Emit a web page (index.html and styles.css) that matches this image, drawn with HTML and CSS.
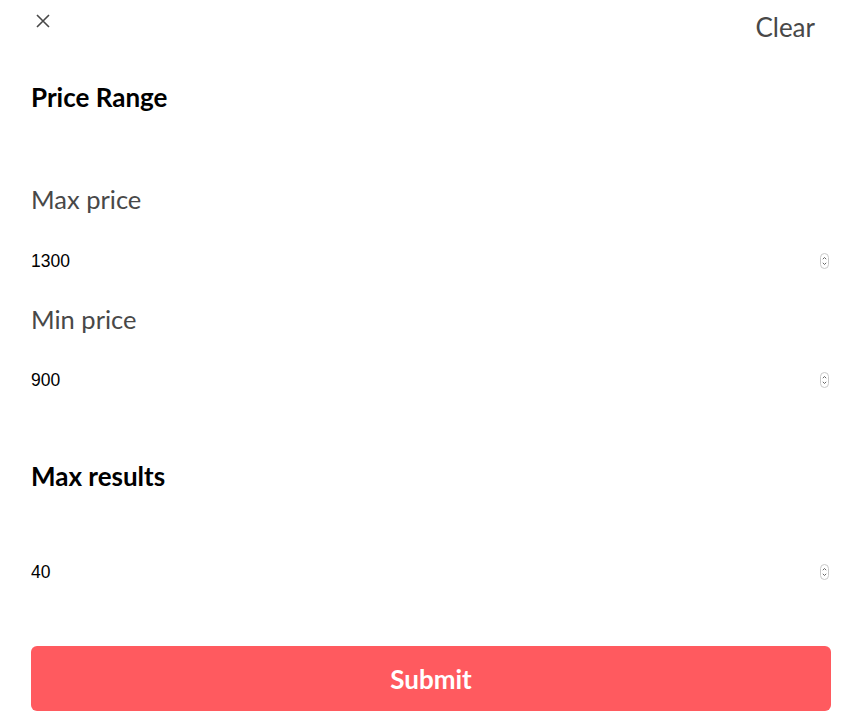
FILE: index.html
```html
<!DOCTYPE html>
<html lang="en">
<head>
<meta charset="utf-8">
<title>Filters</title>
<link rel="stylesheet" href="styles.css">
</head>
<body>
<form class="panel">
  <div class="header">
    <button type="button" class="close" aria-label="Close">
      <svg width="16" height="16" viewBox="0 0 16 16"><path d="M2 2 L14 14 M14 2 L2 14" stroke="#484848" stroke-width="1.6" fill="none"/></svg>
    </button>
    <button type="button" class="clear">Clear</button>
  </div>

  <h2 class="section-title first">Price Range</h2>

  <label class="field-label first-label" for="max">Max price</label>
  <div class="number-row">
    <input id="max" class="number-input" type="text" value="1300">
    <span class="spinner"><svg width="9" height="16" viewBox="0 0 9 16"><rect x="0.5" y="0.5" width="8" height="15" rx="4" fill="#fff" stroke="#c8c8c8"/><path d="M2.8 6.2 L4.5 4.5 L6.2 6.2 M2.8 9.8 L4.5 11.5 L6.2 9.8" stroke="#555" stroke-width="0.9" fill="none"/></svg></span>
  </div>

  <label class="field-label second-label" for="min">Min price</label>
  <div class="number-row row-min">
    <input id="min" class="number-input" type="text" value="900">
    <span class="spinner"><svg width="9" height="16" viewBox="0 0 9 16"><rect x="0.5" y="0.5" width="8" height="15" rx="4" fill="#fff" stroke="#c8c8c8"/><path d="M2.8 6.2 L4.5 4.5 L6.2 6.2 M2.8 9.8 L4.5 11.5 L6.2 9.8" stroke="#555" stroke-width="0.9" fill="none"/></svg></span>
  </div>

  <h2 class="section-title second">Max results</h2>
  <div class="number-row row-results">
    <input id="results" class="number-input" type="text" value="40">
    <span class="spinner"><svg width="9" height="16" viewBox="0 0 9 16"><rect x="0.5" y="0.5" width="8" height="15" rx="4" fill="#fff" stroke="#c8c8c8"/><path d="M2.8 6.2 L4.5 4.5 L6.2 6.2 M2.8 9.8 L4.5 11.5 L6.2 9.8" stroke="#555" stroke-width="0.9" fill="none"/></svg></span>
  </div>

  <button type="submit" class="submit">Submit</button>
</form>
</body>
</html>
```
FILE: styles.css
```css
html, body {
  margin: 0;
  padding: 0;
  background: #fff;
}

body {
  font-family: Lato, "Open Sans", sans-serif;
  color: #484848;
}

.panel {
  display: flex;
  flex-direction: column;
  padding: 0 20px 0 31px;
}

.header {
  height: 54px;
  display: flex;
  justify-content: space-between;
  align-items: flex-start;
}

.close {
  margin: 13px 0 0 4px;
  padding: 0;
  border: none;
  background: none;
  width: 16px;
  height: 16px;
  display: flex;
  cursor: pointer;
}

.clear {
  margin: 0 16px 0 0;
  padding: 0;
  border: none;
  background: none;
  font-family: inherit;
  font-size: 26px;
  line-height: 54px;
  color: #484848;
  cursor: pointer;
}

.section-title {
  margin: 0;
  font-size: 26px;
  line-height: 32px;
  font-weight: 700;
  color: #000;
}

.section-title.first { margin-top: 27px; }
.section-title.second { margin-top: 60px; }

.field-label {
  font-size: 25.5px;
  line-height: 32px;
  color: #484848;
}

.first-label { margin-top: 70px; }
.second-label { margin-top: 22px; }

.number-row {
  height: 40px;
  display: flex;
  align-items: center;
  justify-content: space-between;
  margin-top: 26px;
}

.row-min { margin-top: 25px; }
.row-results { margin-top: 60px; }

.number-input {
  flex: 1;
  border: none;
  outline: none;
  padding: 0;
  margin: 0;
  font-family: "Liberation Sans", Arial, sans-serif;
  font-size: 17.5px;
  color: #000;
  background: transparent;
}

.spinner {
  display: flex;
  margin-right: 2px;
}

.submit {
  margin-top: 54px;
  height: 65px;
  border: none;
  border-radius: 6px;
  background: #ff5a5f;
  color: #fff;
  font-family: inherit;
  font-size: 26px;
  font-weight: 700;
  cursor: pointer;
}
```
